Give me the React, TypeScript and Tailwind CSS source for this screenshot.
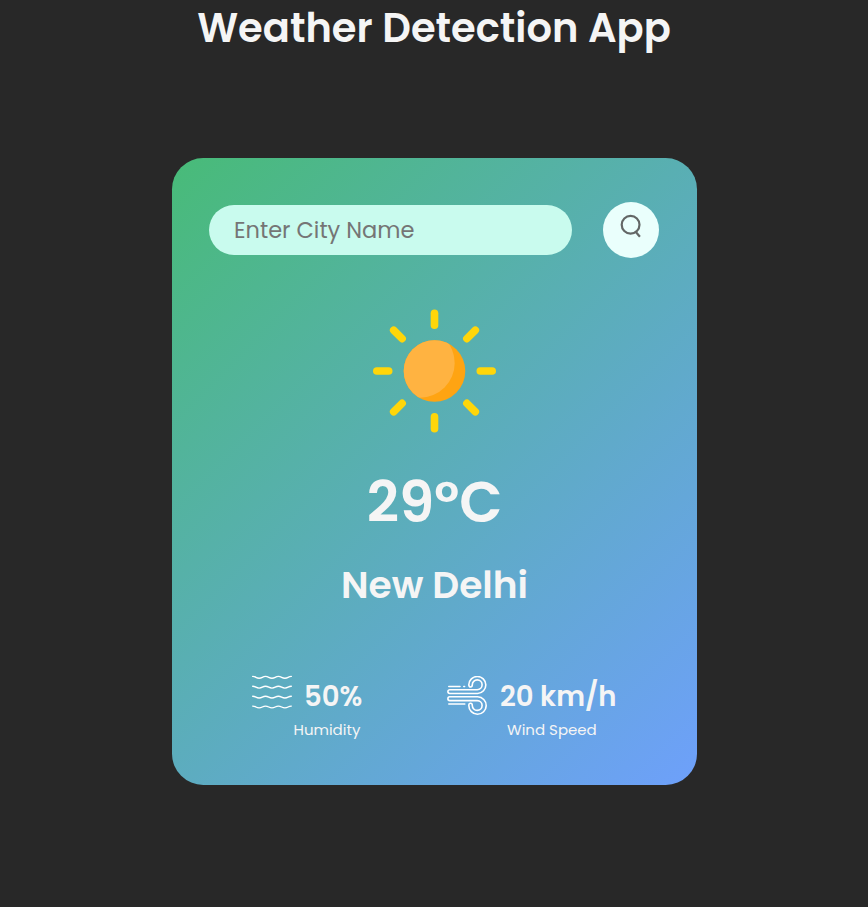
import React from 'react';

function SunIcon() {
  const angles = [0, 45, 90, 135, 180, 225, 270, 315];
  return (
    <svg className="block h-[124px] w-[125px]" viewBox="0 0 125 124">
      <defs>
        <clipPath id="disc">
          <circle cx="62.5" cy="62" r="30.8" />
        </clipPath>
      </defs>
      <g fill="#FFD60A">
        {angles.map((a) => (
          <rect key={a} x="58.7" y="0.5" width="7.6" height="19.5" rx="3.8" transform={`rotate(${a} 62.5 62)`} />
        ))}
      </g>
      <circle cx="62.5" cy="62" r="30.8" fill="#FFA412" />
      <circle cx="48" cy="54" r="34.7" fill="#FFB341" clipPath="url(#disc)" />
    </svg>
  );
}

function HumidityIcon() {
  return (
    <svg className="block h-[40px] w-[40px] overflow-visible" viewBox="0 0 40 40" fill="none" stroke="#fff" strokeWidth="1.4" strokeLinecap="round">
      {[1.3, 11.2, 21.1, 31].map((y) => (
        <path key={y} d={`M.7 ${y - 0.9}c3.2 0 3.2 1.8 6.4 1.8s3.2-1.8 6.4-1.8 3.3 1.8 6.5 1.8 3.2-1.8 6.4-1.8 3.3 1.8 6.5 1.8 3.2-1.8 6.4-1.8`} />
      ))}
    </svg>
  );
}

function WindIcon() {
  return (
    <svg className="block h-[40px] w-[41px]" viewBox="0 0 41 40" fill="none" stroke="#fff" strokeWidth="1.6" strokeLinecap="round" strokeLinejoin="round">
      <path d="M1.8 10.5h11.2M16.8 10.5h.8" />
      <path d="M2.8 13.7H30.2a4.900 4.900 0 1 0-4.900-4.900c0 3-3.500 3-3.500 0A8.500 8.500 0 1 1 30.700 17.500H2.800a1.900 1.900 0 0 1 0-3.800Z" />
      <path d="M2.8 20.8H30.7a8.700 8.700 0 1 1-8.900 8.700c0-3 3.500-3 3.500 0a4.900 4.900 0 1 0 4.900-4.900H2.800a1.900 1.900 0 0 1 0-3.800Z" />
      <path d="M1.8 28h16" />
    </svg>
  );
}

function SearchIcon() {
  return (
    <svg className="block h-6 w-6" viewBox="0 0 24 24" fill="none" stroke="#636766" strokeWidth="2.2">
      <circle cx="11.6" cy="10.7" r="8.9" />
      <path d="m16.2 17.3 4.7 5.5" />
    </svg>
  );
}

export default function App() {
  return (
    <main className="flex h-[907px] w-full flex-col items-center overflow-hidden bg-[#282828] font-['Poppins','Inter',sans-serif] text-[#f5f5f5]">
      <h1 className="h-[56px] whitespace-nowrap text-[40px] leading-[56px] font-semibold">
        <span>Weather Detection App</span>
      </h1>
      <section className="mt-[102px] ml-px flex h-[627px] w-[525px] flex-col items-center rounded-[31.25px] bg-[linear-gradient(135deg,#48bb78,#6ea0fb)]">
        <div className="mt-[44px] flex w-[451px] items-center">
          <input
            aria-label="City name"
            placeholder="Enter City Name"
            className="h-[50px] w-[363px] rounded-full bg-[#c9fbee] px-[25px] text-[22.5px] outline-none placeholder:text-[#757575] placeholder:opacity-100"
          />
          <button aria-label="Search" className="ml-[31px] flex h-14 w-14 justify-center rounded-full bg-[#eafffc] pt-3">
            <SearchIcon />
          </button>
        </div>
        <div className="mt-[51px]">
          <SunIcon />
        </div>
        <div className="mt-[35px] flex h-[70px] items-center whitespace-nowrap text-[56.25px] leading-[70px] font-semibold">
          <span>29°C</span>
        </div>
        <div className="mt-[22px] h-[50px] whitespace-nowrap text-[37.5px] leading-[50px] font-semibold">
          <span>New Delhi</span>
        </div>
        <div className="mt-[66px] flex w-full pl-[80px]">
          <div className="flex w-[195px]">
            <HumidityIcon />
            <div className="ml-[12px]">
              <p className="mt-px h-[40px] whitespace-nowrap text-[27.5px] leading-[40px] font-semibold"><span>50%</span></p>
              <p className="mt-px -ml-[10.5px] h-[24px] whitespace-nowrap text-[15px] leading-[24px]"><span>Humidity</span></p>
            </div>
          </div>
          <div className="flex">
            <WindIcon />
            <div className="ml-[12px]">
              <p className="mt-px h-[40px] whitespace-nowrap text-[27.5px] leading-[40px] font-semibold"><span>20 km/h</span></p>
              <p className="mt-px ml-[7px] h-[24px] whitespace-nowrap text-[15px] leading-[24px]"><span>Wind Speed</span></p>
            </div>
          </div>
        </div>
      </section>
    </main>
  );
}
